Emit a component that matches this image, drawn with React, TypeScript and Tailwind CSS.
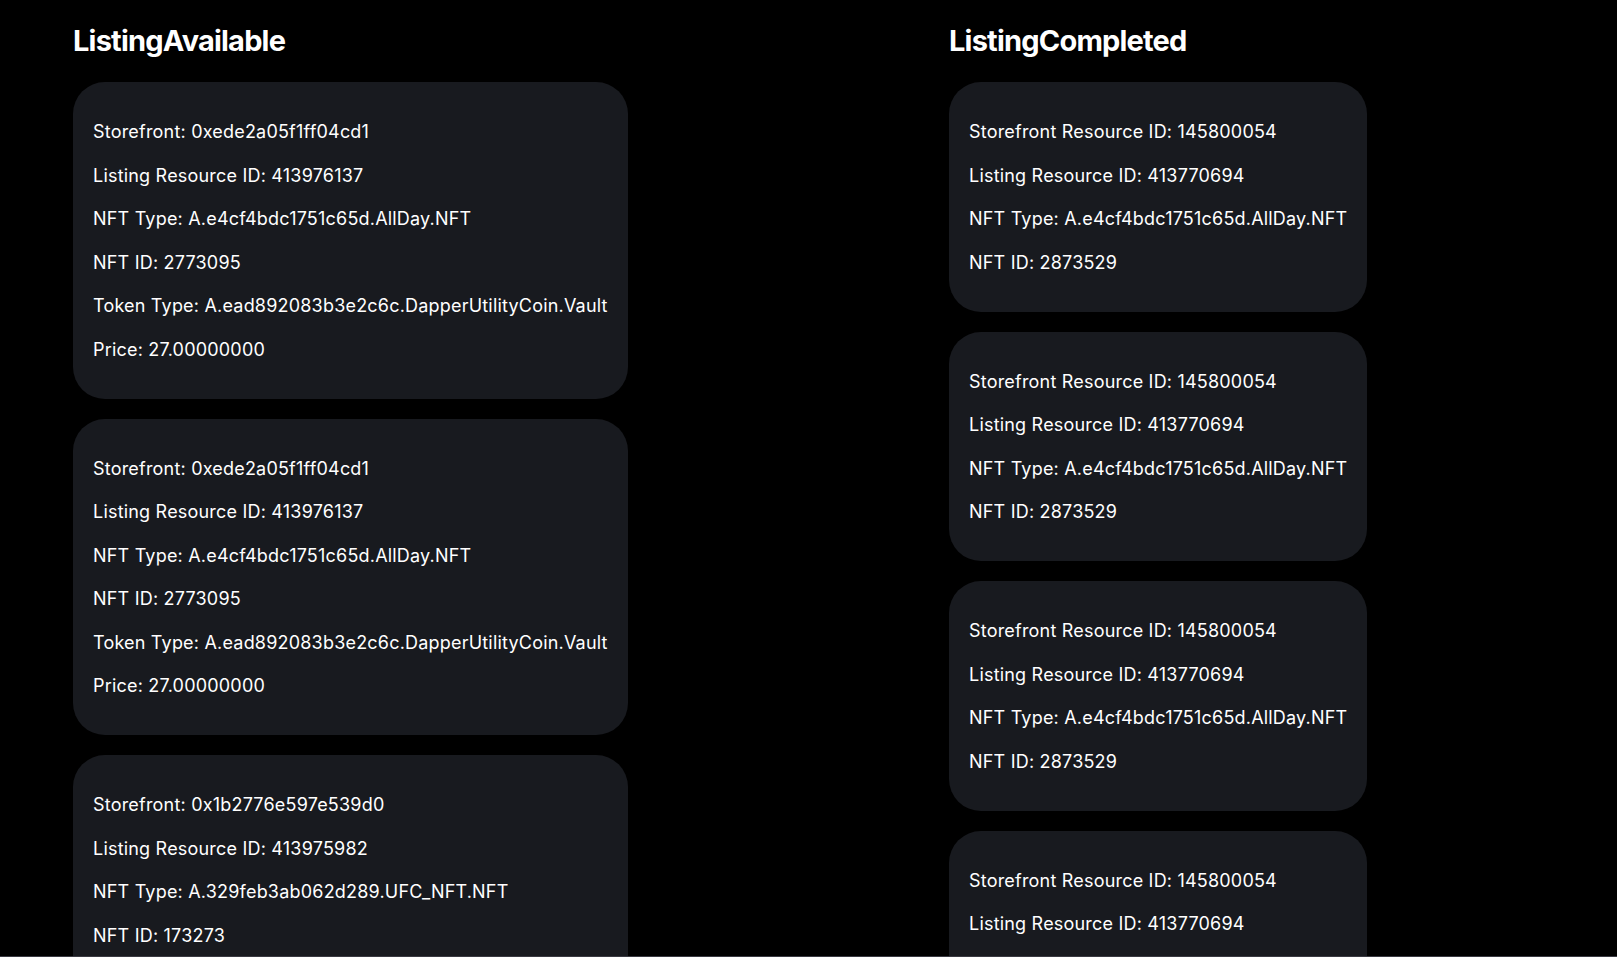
import React from "react";

const available = [
  {
    storefront: "0xede2a05f1ff04cd1",
    listing: "413976137",
    nftType: "A.e4cf4bdc1751c65d.AllDay.NFT",
    nftId: "2773095",
    token: "A.ead892083b3e2c6c.DapperUtilityCoin.Vault",
    price: "27.00000000",
  },
  {
    storefront: "0xede2a05f1ff04cd1",
    listing: "413976137",
    nftType: "A.e4cf4bdc1751c65d.AllDay.NFT",
    nftId: "2773095",
    token: "A.ead892083b3e2c6c.DapperUtilityCoin.Vault",
    price: "27.00000000",
  },
  {
    storefront: "0x1b2776e597e539d0",
    listing: "413975982",
    nftType: "A.329feb3ab062d289.UFC_NFT.NFT",
    nftId: "173273",
    token: "A.ead892083b3e2c6c.DapperUtilityCoin.Vault",
    price: "12.00000000",
  },
];

const completed = [0, 1, 2, 3].map(() => ({
  storefront: "145800054",
  listing: "413770694",
  nftType: "A.e4cf4bdc1751c65d.AllDay.NFT",
  nftId: "2873529",
}));

function Card({ lines }: { lines: string[] }) {
  return (
    <div className="w-fit rounded-[32px] bg-[#181a1f] px-[20px] pt-[37px] pb-[36.5px] flex flex-col gap-[18px]">
      {lines.map((l, i) => (
        <p key={i} className="text-[18px] leading-[25.5px] tracking-[0.2px] text-white whitespace-nowrap">
          {l}
        </p>
      ))}
    </div>
  );
}

export default function App() {
  return (
    <div
      className="h-[957px] overflow-hidden bg-black text-white flex border-b border-[#3a3a42]"
      style={{ fontFamily: "Inter, 'Noto Sans', sans-serif" }}
    >
      <div className="w-[949px] pl-[73px] shrink-0">
        <h1 className="text-[29px] font-bold leading-[38px] mt-[22px] mb-[22px] tracking-[-0.8px]">ListingAvailable</h1>
        <div className="flex flex-col gap-[20px]">
          {available.map((a, i) => (
            <Card
              key={i}
              lines={[
                `Storefront: ${a.storefront}`,
                `Listing Resource ID: ${a.listing}`,
                `NFT Type: ${a.nftType}`,
                `NFT ID: ${a.nftId}`,
                `Token Type: ${a.token}`,
                `Price: ${a.price}`,
              ]}
            />
          ))}
        </div>
      </div>
      <div className="flex-1">
        <h1 className="text-[29px] font-bold leading-[38px] mt-[22px] mb-[22px] tracking-[-0.8px]">ListingCompleted</h1>
        <div className="flex flex-col gap-[20px]">
          {completed.map((c, i) => (
            <Card
              key={i}
              lines={[
                `Storefront Resource ID: ${c.storefront}`,
                `Listing Resource ID: ${c.listing}`,
                `NFT Type: ${c.nftType}`,
                `NFT ID: ${c.nftId}`,
              ]}
            />
          ))}
        </div>
      </div>
    </div>
  );
}
